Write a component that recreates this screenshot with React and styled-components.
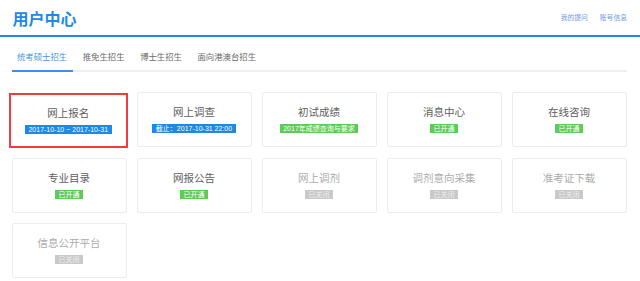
import React from 'react';
import styled, { createGlobalStyle } from 'styled-components';

const GlobalStyle = createGlobalStyle`
  html, body {
    margin: 0;
    padding: 0;
    background: #fff;
  }
  body {
    font-family: "Liberation Sans", "Noto Sans CJK SC", sans-serif;
  }
`;

const Header = styled.div`
  display: flex;
  align-items: center;
  justify-content: space-between;
  height: 35px;
  padding: 0 13px 0 12.5px;
  border-bottom: 2px solid #1e88e5;
`;

const Title = styled.div`
  font-size: 16px;
  font-weight: 700;
  color: #1e88e5;
  margin-top: 1px;
`;

const Links = styled.div`
  display: flex;
  gap: 12px;
  margin-top: -1px;
`;

const Link = styled.a`
  font-size: 6.8px;
  color: #6f9be0;
  text-decoration: none;
`;

const Main = styled.div`
  padding: 0 13.3px 0 11.5px;
`;

const TabBar = styled.div`
  display: flex;
  margin-top: 14px;
  border-bottom: 2px solid #efefef;
`;

const Tab = styled.div`
  font-size: 8.4px;
  line-height: 13px;
  padding: 0 5.5px 6px;
  margin-right: 4.5px;
  margin-bottom: -2px;
  color: ${p => (p.$active ? '#4a94e6' : '#6a6a6a')};
  border-bottom: 2px solid ${p => (p.$active ? '#3d8fe8' : 'transparent')};
`;

const Grid = styled.div`
  display: grid;
  grid-template-columns: repeat(5, 115px);
  grid-auto-rows: 55px;
  column-gap: 10px;
  row-gap: 10.5px;
  margin-top: 20.3px;
`;

const Card = styled.div`
  box-sizing: border-box;
  display: flex;
  flex-direction: column;
  align-items: center;
  justify-content: center;
  border: 1px solid #ededed;
  border-radius: 2px;
  background: #fff;
`;

const SelectedCard = styled(Card)`
  border: 2px solid rgb(240, 60, 60);
  border-radius: 0;
  margin: 1px -1px -1px -2.5px;
`;

const CardTitle = styled.div`
  font-size: 10.5px;
  line-height: 13px;
  color: ${p => (p.$off ? '#ababab' : '#5e5e5e')};
`;

const badgeColors = {
  blue: { bg: '#1f88e0', fg: '#fff' },
  green: { bg: '#5ccb57', fg: '#fff' },
  gray: { bg: '#c9c9c9', fg: '#eeeeee' },
};

const Badge = styled.span`
  margin-top: 5px;
  font-size: 7px;
  line-height: 9px;
  height: 9px;
  padding: 0 3.5px;
  white-space: nowrap;
  background: ${p => badgeColors[p.$tone].bg};
  color: ${p => badgeColors[p.$tone].fg};
`;

const tabs = ['统考硕士招生', '推免生招生', '博士生招生', '面向港澳台招生'];

const items = [
  { title: '网上报名', badge: '2017-10-10 ~ 2017-10-31', tone: 'blue', selected: true },
  { title: '网上调查', badge: '截止：2017-10-31 22:00', tone: 'blue' },
  { title: '初试成绩', badge: '2017年成绩查询与要求', tone: 'green' },
  { title: '消息中心', badge: '已开通', tone: 'green' },
  { title: '在线咨询', badge: '已开通', tone: 'green' },
  { title: '专业目录', badge: '已开通', tone: 'green' },
  { title: '网报公告', badge: '已开通', tone: 'green' },
  { title: '网上调剂', badge: '已关闭', tone: 'gray' },
  { title: '调剂意向采集', badge: '已关闭', tone: 'gray' },
  { title: '准考证下载', badge: '已关闭', tone: 'gray' },
  { title: '信息公开平台', badge: '已关闭', tone: 'gray' },
];

export default function App() {
  return (
    <>
      <GlobalStyle />
      <Header>
        <Title>用户中心</Title>
        <Links>
          <Link href="#">我的提问</Link>
          <Link href="#">账号信息</Link>
        </Links>
      </Header>
      <Main>
        <TabBar>
          {tabs.map((t, i) => (
            <Tab key={t} $active={i === 0}>{t}</Tab>
          ))}
        </TabBar>
        <Grid>
          {items.map(item => {
            const Box = item.selected ? SelectedCard : Card;
            return (
              <Box key={item.title}>
                <CardTitle $off={item.tone === 'gray'}>{item.title}</CardTitle>
                <Badge $tone={item.tone}>{item.badge}</Badge>
              </Box>
            );
          })}
        </Grid>
      </Main>
    </>
  );
}
